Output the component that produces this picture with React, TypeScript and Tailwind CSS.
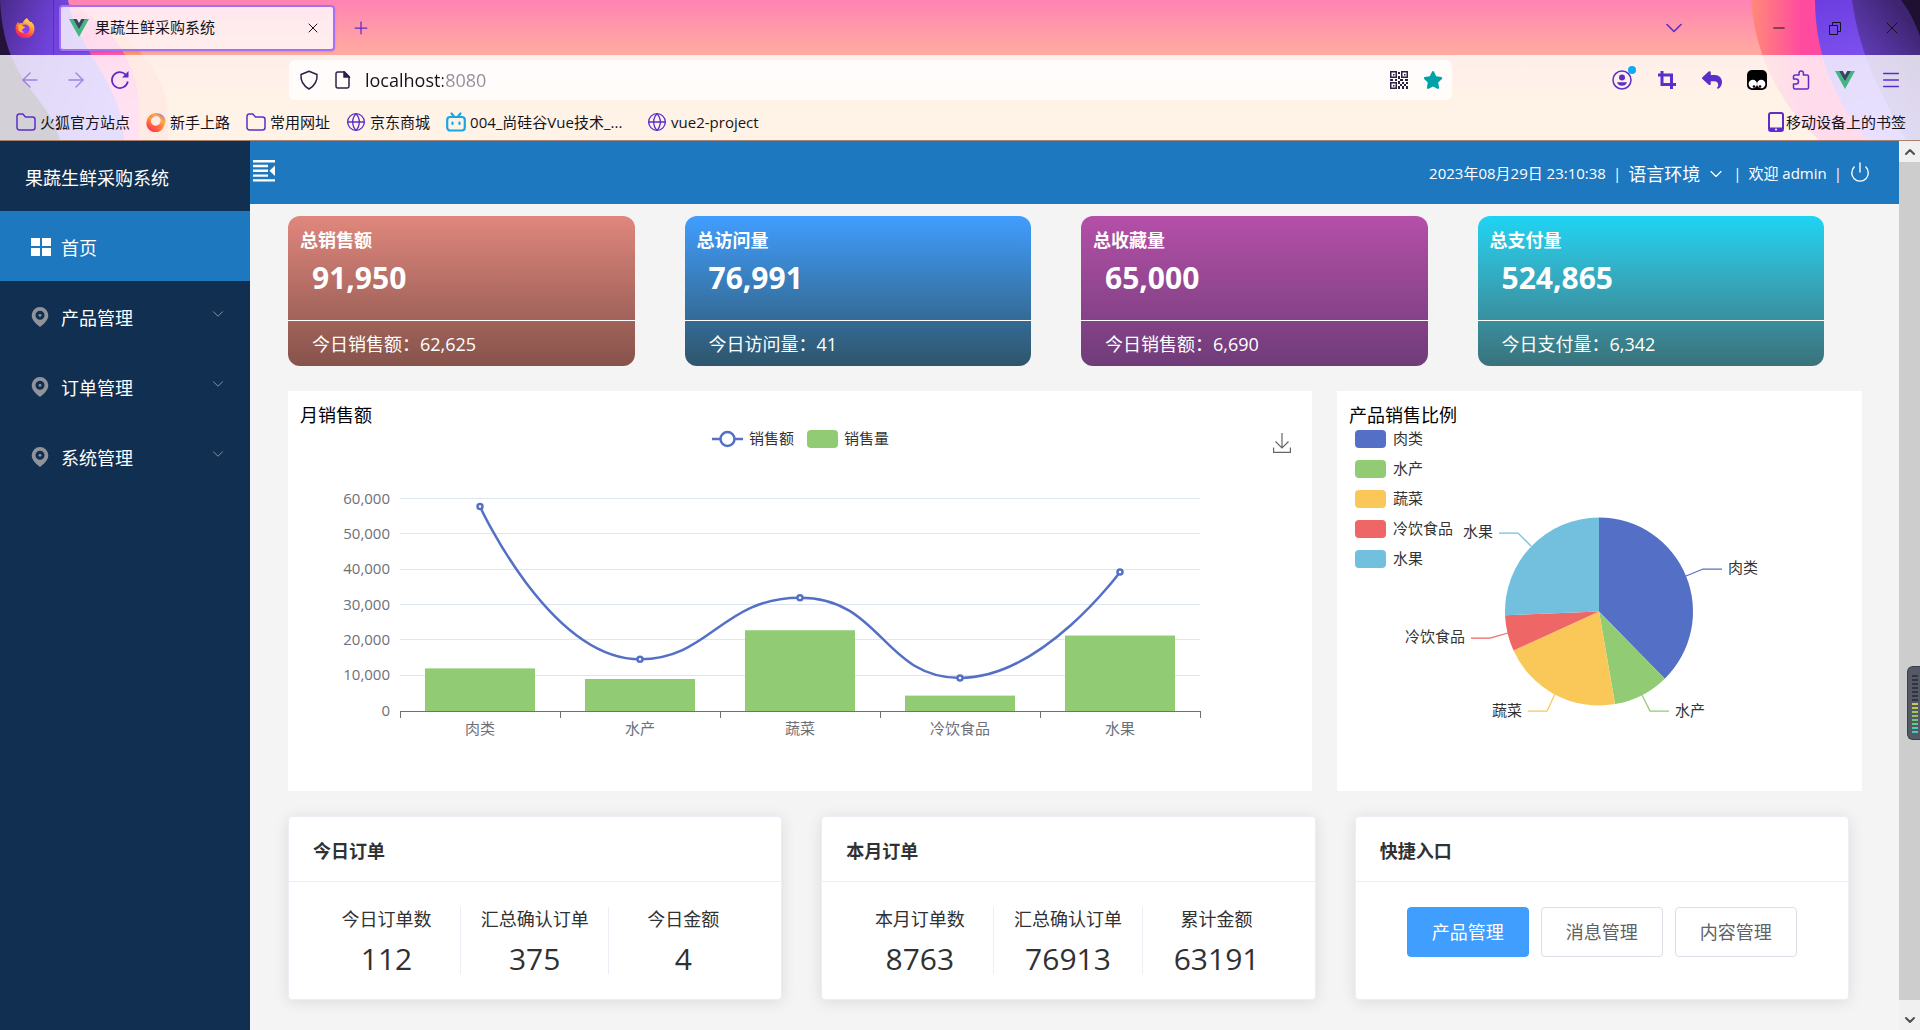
import { useState, type ReactNode } from 'react';
import { ArrowLeft, ArrowRight, ChevronDown, ChevronUp, Globe, Menu, Minus, Plus, Power, X } from 'lucide-react';
import { FaCrop, FaReply, FaStar } from 'react-icons/fa6';

const VueLogo = () => (
  <svg viewBox="0 0 20 18" className="h-[18px] w-5 shrink-0">
    <path d="M0 0h4l6 10.6L16 0h4L10 18z" fill="#41b883" />
    <path d="M4 0h3.8L10 4l2.2-4H16l-6 10.6z" fill="#35495e" />
  </svg>
);

const FirefoxLogo = () => (
  <svg viewBox="0 0 20 20" className="h-5 w-5 shrink-0">
    <defs>
      <linearGradient id="fox" x1="0.8" y1="0" x2="0.3" y2="1">
        <stop offset="0" stopColor="#fff36a" />
        <stop offset="0.4" stopColor="#ff9a2e" />
        <stop offset="0.75" stopColor="#ff3b4e" />
        <stop offset="1" stopColor="#e31587" />
      </linearGradient>
    </defs>
    <path
      d="M12 0c.6 1.8 2.3 3 3.6 4.3.5-.2.6-.6.6-.6 2 1.6 3.3 4.3 3.3 7.3A9.5 9.5 0 0 1 .5 11C.5 7.5 1.8 5.5 3.2 3.8c0 .8.2 1.4.5 1.8 1-.6 2.6-.7 3.7-.1C8.300 3 10 1 12 0z"
      fill="url(#fox)"
    />
    <circle cx="10" cy="11" r="4.6" fill="#8a3df0" />
    <path d="M3.5 7c2-.8 3.7-.2 4.800 1.200 1.200.2 1.900.6 1.600 1.300-.5 1-2.300 1-2.800 2.200-.3 1 .8 2.300 2.800 2.100-2 1.700-5.900.8-6.700-2.200z" fill="#ffb43a" />
  </svg>
);

const StarterIcon = () => (
  <svg viewBox="0 0 20 20" className="h-5 w-5 shrink-0">
    <defs>
      <linearGradient id="starter" x1="1" y1="0" x2="0.2" y2="1">
        <stop offset="0" stopColor="#9059ff" />
        <stop offset="0.35" stopColor="#ffb13b" />
        <stop offset="0.7" stopColor="#ff5b3f" />
        <stop offset="1" stopColor="#ff2a6d" />
      </linearGradient>
    </defs>
    <path d="M10 1a9 9 0 1 0 8.600 11.600A7.600 7.600 0 0 0 13 1.600 9 9 0 0 0 10 1zm1.200 3a5 5 0 1 1-6.400 6.200C4.300 7 7 4 11.200 4z" fill="url(#starter)" fillRule="evenodd" />
    <path d="M3 5a9 9 0 1 0 15 9c-4 3.500-12 2-13-4-.3-2 .2-3.500 1-4.600z" fill="url(#starter)" />
  </svg>
);

const FolderIcon = () => (
  <svg viewBox="0 0 20 18" className="h-[18px] w-5 shrink-0" fill="none" stroke="#5b2ec9" strokeWidth="1.5">
    <path d="M1 3.200A2.200 2.200 0 0 1 3.200 1h3.600L9.500 4h7A2.500 2.500 0 0 1 19 6.500v8a2.500 2.500 0 0 1-2.500 2.500h-13A2.500 2.500 0 0 1 1 14.500z" />
  </svg>
);

const BiliIcon = () => (
  <svg viewBox="0 0 20 20" className="h-5 w-5 shrink-0" fill="none" stroke="#19a7e0" strokeWidth="2.2" strokeLinecap="round">
    <rect x="1.2" y="5" width="17.6" height="13.5" rx="3" />
    <path d="M5.500 1.500 8 4.500M14.500 1.500 12 4.500M6.500 10.500v1.500M13.500 10.500v1.500" />
  </svg>
);

const PuzzleIcon = () => (
  <svg viewBox="0 0 18 20" className="h-5 w-[18px]" fill="none" stroke="#5b2ec9" strokeWidth="1.5">
    <path d="M1.500 9V6.500A1.500 1.500 0 0 1 3 5h4V3.200a2.200 2.200 0 0 1 4.400 0V5H15a1.500 1.500 0 0 1 1.500 1.500V17.500A1.500 1.500 0 0 1 15 19H3a1.500 1.500 0 0 1-1.500-1.500V14H4a2.300 2.300 0 0 0 0-5z" strokeLinejoin="round" />
  </svg>
);

const QrIcon = () => (
  <svg viewBox="0 0 18 18" className="h-[18px] w-[18px]" fill="#2b2147">
    <path d="M0 0h7v7H0zM11 0h7v7h-7zM0 11h7v7H0zM1.500 1.500v4h4v-4zM12.500 1.500v4h4v-4zM1.500 12.500v4h4v-4z" fillRule="evenodd" />
    <path d="M3 3h1.500v1.500H3zM14 3h1.500v1.500H14zM3 14h1.500v1.500H3zM8 1h2v2H8zM8 5h2v3H8zM0 8h3v2H0zM5 8h2v2H5zM10 8h3v2h-3zM15 8h3v2h-3zM8 10h2v3H8zM12 11h2v2h-2zM16 11h2v2h-2zM10 13h2v2h-2zM14 13h2v2h-2zM8 15h2v3H8zM12 15h2v3h-2zM16 15h2v3h-2z" />
  </svg>
);

const PinIcon = () => (
  <svg viewBox="0 0 18 20" className="mt-0.5 h-5 w-[18px] shrink-0">
    <path d="M9 0a8.300 8.300 0 0 1 8.300 8.300C17.300 13 13 17 9 20 5 17 .7 13 .7 8.300A8.300 8.300 0 0 1 9 0zm0 3.800a4.500 4.500 0 1 0 0 9 4.500 4.500 0 0 0 0-9z" fill="#909399" fillRule="evenodd" />
    <circle cx="9" cy="8.3" r="1.4" fill="#909399" />
  </svg>
);

const bookmarks: { title: string; icon: ReactNode; width?: string }[] = [
  { title: '火狐官方站点', icon: <FolderIcon /> },
  { title: '新手上路', icon: <StarterIcon /> },
  { title: '常用网址', icon: <FolderIcon /> },
  { title: '京东商城', icon: <Globe className="h-5 w-5 text-[#5b2ec9]" strokeWidth={1.6} /> },
  { title: '004_尚硅谷Vue技术_...', icon: <BiliIcon />, width: 'w-[185px]' },
  { title: 'vue2-project', icon: <Globe className="h-5 w-5 text-[#5b2ec9]" strokeWidth={1.6} /> },
];

const ThemeArt = () => (
  <>
    <svg viewBox="0 0 180 140" className="absolute left-0 top-0 h-[140px] w-[180px]">
      <defs>
        <linearGradient id="leftPurple" x1="0" y1="0" x2="1" y2="0.4">
          <stop offset="0" stopColor="#4a2a8a" />
          <stop offset="0.45" stopColor="#7043dc" />
          <stop offset="1" stopColor="#8458f5" />
        </linearGradient>
        <linearGradient id="leftPink" x1="0" y1="0" x2="0.3" y2="1">
          <stop offset="0" stopColor="#ff74b0" />
          <stop offset="0.4" stopColor="#ff4da6" />
          <stop offset="1" stopColor="#ff6bc0" />
        </linearGradient>
      </defs>
      <path d="M60 0C110 20 168 60 168 118V140H40V0z" fill="#ff9a72" />
      <path d="M60 0C105 15 138 60 139 105V140H40V0z" fill="url(#leftPink)" />
      <path d="M0 0H68C76 50 122 80 124 140H0z" fill="url(#leftPurple)" />
      <path d="M0 0C4 85 46 90 60 140H0z" fill="#241239" />
    </svg>
    <svg viewBox="1700 0 220 140" className="absolute right-0 top-0 h-[140px] w-[220px]">
      <defs>
        <linearGradient id="rightPink" x1="0" y1="0" x2="1" y2="0">
          <stop offset="0" stopColor="#ff8a78" />
          <stop offset="0.3" stopColor="#ff4b9f" />
          <stop offset="1" stopColor="#ff4b9f" />
        </linearGradient>
        <linearGradient id="rightPurple" x1="0" y1="0" x2="0.2" y2="1">
          <stop offset="0" stopColor="#6c3de0" />
          <stop offset="1" stopColor="#8f66ff" />
        </linearGradient>
        <linearGradient id="rightDeep" x1="0" y1="1" x2="0.6" y2="0">
          <stop offset="0" stopColor="#8458ff" />
          <stop offset="1" stopColor="#3f2472" />
        </linearGradient>
      </defs>
      <path d="M1751 0C1755 60 1785 110 1819 140H1920V0z" fill="url(#rightPink)" />
      <path d="M1815 0C1815 60 1840 110 1868 140H1920V0z" fill="url(#rightPurple)" />
      <path d="M1852 0C1860 60 1885 100 1906 140H1920V0z" fill="url(#rightDeep)" />
      <path d="M1901 0Q1912 14 1920 36V0z" fill="#1f0f33" />
    </svg>
  </>
);

const BrowserChrome = () => (
  <header className="relative border-b border-[#a8826f] bg-linear-to-b from-[#ff83b3] from-0% via-[#ffac9f] via-40% to-[#ffbf85] to-70% text-[15px] text-[#15141a]">
    <ThemeArt />
    <div className="relative flex h-[55px] items-center pr-[18px]">
      <div className="flex h-full w-[54px] items-center border-r border-black/20 pl-[15px]">
        <FirefoxLogo />
      </div>
      <div className="ml-[5px] flex h-[46px] w-[276px] items-center gap-1.5 rounded border-2 border-[#a670f5] bg-white/80 px-2 shadow">
        <VueLogo />
        <span className="grow truncate">果蔬生鲜采购系统</span>
        <button aria-label="关闭标签页" className="mr-1">
          <X className="h-4 w-4" strokeWidth={1.5} />
        </button>
      </div>
      <button aria-label="新建标签页" className="ml-4">
        <Plus className="h-5 w-5 text-[#5b2ec9]" strokeWidth={1.5} />
      </button>
      <button aria-label="列出所有标签页" className="ml-auto">
        <ChevronDown className="h-7 w-7 text-[#5b2ec9]" strokeWidth={1.4} />
      </button>
      <div className="ml-[82px] flex items-center gap-[38px]">
        <button aria-label="最小化">
          <Minus className="h-[18px] w-[18px]" strokeWidth={1.5} />
        </button>
        <button aria-label="还原">
          <svg viewBox="0 0 18 18" className="h-[18px] w-[18px]" fill="none" stroke="#15141a">
            <path d="M3.500 6.500h8v9h-8zM6.500 6V3.500h8v9H12" />
          </svg>
        </button>
        <button aria-label="关闭">
          <X className="h-5 w-5" strokeWidth={1.2} />
        </button>
      </div>
    </div>

    <div className="relative bg-white/80">
      <div className="flex items-center pt-[5px]">
        <div className="flex w-[289px] items-center gap-[22px] pl-[18px] text-[#5b2ec9]">
          <button aria-label="后退" className="opacity-50">
            <ArrowLeft className="h-6 w-6" strokeWidth={1.4} />
          </button>
          <button aria-label="前进" className="opacity-50">
            <ArrowRight className="h-6 w-6" strokeWidth={1.4} />
          </button>
          <button aria-label="刷新">
            <svg viewBox="0 0 20 20" className="h-5 w-5" fill="none" stroke="currentColor" strokeWidth="1.7">
              <path d="M17.800 11.500A8 8 0 1 1 15.500 4.300" />
              <path d="M18.500 1v6.500H12z" fill="currentColor" stroke="none" />
            </svg>
          </button>
        </div>
        <div className="flex h-10 grow items-center rounded-md bg-white/80 pl-2.5 pr-[9px]">
          <svg viewBox="0 0 20 20" className="h-5 w-5" fill="none" stroke="#2b2147" strokeWidth="1.5" strokeLinejoin="round">
            <path d="M10 1.200 18 4.500c.5 6-2 11-8 14.500C4 15.500 1.500 10.500 2 4.500z" />
          </svg>
          <svg viewBox="0 0 16 18" className="ml-4 h-[18px] w-4" fill="none" stroke="#2b2147" strokeWidth="1.5">
            <path d="M2.700 1h6.800L14 5.500v9.800A1.700 1.700 0 0 1 12.300 17H2.700A1.700 1.700 0 0 1 1 15.300V2.700A1.700 1.700 0 0 1 2.700 1z" />
            <path d="M9 1v5h5z" fill="#2b2147" />
          </svg>
          <input
            aria-label="地址栏"
            defaultValue="localhost:8080"
            className="ml-3.5 min-w-0 grow bg-[linear-gradient(90deg,#15141a_78px,#8f8d9a_78px)] bg-clip-text text-lg text-transparent outline-none"
          />
          <button aria-label="二维码">
            <QrIcon />
          </button>
          <button aria-label="编辑此书签" className="ml-[15px]">
            <FaStar className="h-5 w-5 text-[#00a2a8]" />
          </button>
        </div>
        <div className="ml-40 flex items-center gap-[25px] pr-[18px] text-[#5b2ec9]">
          <button aria-label="账户" className="relative">
            <svg viewBox="0 0 20 20" className="h-5 w-5" fill="none" stroke="currentColor" strokeWidth="1.5">
              <circle cx="10" cy="10" r="9" />
              <circle cx="10" cy="7.5" r="3" fill="currentColor" stroke="none" />
              <path d="M5 12.200h10c-.8 2.500-2.600 3.500-5 3.500s-4.200-1-5-3.500z" fill="currentColor" stroke="none" />
            </svg>
            <span className="absolute -right-1 -top-1 h-2 w-2 rounded-full bg-[#0fa9f5]" />
          </button>
          <button aria-label="截图">
            <svg viewBox="0 0 20 20" className="h-5 w-5" fill="none" stroke="currentColor" strokeWidth="3">
              <path d="M5 1v13.500h14M1 5h13.500v14" />
            </svg>
          </button>
          <button aria-label="撤销">
            <FaReply className="h-5 w-5" />
          </button>
          <button aria-label="脚本管理">
            <svg viewBox="0 0 20 20" className="h-5 w-5">
              <rect width="20" height="20" rx="5" fill="#000" />
              <circle cx="5.8" cy="14" r="4.2" fill="#fff" />
              <circle cx="14.2" cy="14" r="4.2" fill="#fff" />
              <circle cx="7" cy="16.5" r="1.3" fill="#000" />
              <circle cx="13" cy="16.5" r="1.3" fill="#000" />
            </svg>
          </button>
          <button aria-label="扩展">
            <PuzzleIcon />
          </button>
          <button aria-label="Vue Devtools">
            <VueLogo />
          </button>
          <button aria-label="应用程序菜单">
            <Menu className="h-[22px] w-[22px]" strokeWidth={1.6} />
          </button>
        </div>
      </div>
      <div className="flex h-10 items-center gap-4 pl-4 pr-3.5 pt-1">
        {bookmarks.map((bookmark) => (
          <a key={bookmark.title} href="#" className={`flex items-center gap-1 whitespace-nowrap ${bookmark.width ?? ''}`}>
            {bookmark.icon}
            {bookmark.title}
          </a>
        ))}
        <a href="#" className="ml-auto flex items-center gap-0.5 whitespace-nowrap">
          <svg viewBox="0 0 16 20" className="h-5 w-4">
            <rect x="1" y="1" width="14" height="18" rx="2" fill="none" stroke="#5b2ec9" strokeWidth="2" />
            <path d="M1 15.500h14V19H1z" fill="#5b2ec9" />
            <circle cx="8" cy="17.5" r="1" fill="#fff" />
          </svg>
          移动设备上的书签
        </a>
      </div>
    </div>
  </header>
);

const menus = ['产品管理', '订单管理', '系统管理'];

const Sidebar = () => (
  <aside className="w-[250px] shrink-0 bg-[#112f50] text-lg text-white">
    <h1 className="flex h-[70px] items-center pl-[25px] pt-1">果蔬生鲜采购系统</h1>
    <nav>
      <a href="#" className="flex h-[70px] items-center gap-2.5 bg-[#1e78bf] pl-[31px]">
        <svg viewBox="0 0 20 20" className="mt-0.5 h-5 w-5" fill="#fff">
          <path d="M0 1h9v8H0zM11 1h9v8h-9zM0 11h9v8H0zM11 11h9v8h-9z" />
        </svg>
        <span className="pt-1">首页</span>
      </a>
      {menus.map((menu) => (
        <button key={menu} className="flex h-[70px] w-full items-center gap-3 pl-[31px] pr-[23px]">
          <PinIcon />
          <span className="pt-1">{menu}</span>
          <ChevronDown className="mb-1 ml-auto h-[18px] w-[18px] text-[#909399]" strokeWidth={1.3} />
        </button>
      ))}
    </nav>
  </aside>
);

const TopBar = () => (
  <div className="flex h-[63px] items-center bg-[#1e78bf] pl-[3px] pr-7 text-[15px] text-white">
    <button aria-label="折叠菜单">
      <svg viewBox="0 0 22 22" className="mb-1 h-[22px] w-[22px]" fill="#fff">
        <path d="M0 0h22v2.500H0zM0 4.800h15v2.400H0zM0 9.600h15V12H0zM0 14.400h15v2.400H0zM0 19.200h22v2.300H0zM22 5.500v10.500L16.500 10.800z" />
      </svg>
    </button>
    <div className="ml-auto flex items-center gap-[7px] pt-0.5">
      <time>2023年08月29日 23:10:38</time>
      <span>|</span>
      <button className="flex items-center gap-1.5 text-lg">
        语言环境
        <ChevronDown className="h-5 w-5" strokeWidth={1.4} />
      </button>
      <span>|</span>
      <span>欢迎 admin</span>
      <span>|</span>
      <button aria-label="退出登录">
        <Power className="mb-1 h-[22px] w-[22px]" strokeWidth={1.5} />
      </button>
    </div>
  </div>
);

const summaries = [
  { title: '总销售额', total: '91,950', label: '今日销售额', today: '62,625', color: 'from-[#e0877d] to-[#86534b]' },
  { title: '总访问量', total: '76,991', label: '今日访问量', today: '41', color: 'from-[#409eff] to-[#2e556b]' },
  { title: '总收藏量', total: '65,000', label: '今日销售额', today: '6,690', color: 'from-[#b54fa8] to-[#6f3c79]' },
  { title: '总支付量', total: '524,865', label: '今日支付量', today: '6,342', color: 'from-[#1cd4f4] to-[#39727a]' },
];

const sales = [
  { name: '肉类', amount: 58000, count: 12200, color: '#5470c6' },
  { name: '水产', amount: 14800, count: 9200, color: '#91cc75' },
  { name: '蔬菜', amount: 32200, count: 23000, color: '#fac858' },
  { name: '冷饮食品', amount: 9500, count: 4500, color: '#ee6666' },
  { name: '水果', amount: 39500, count: 21500, color: '#73c0de' },
];

const ticks = [0, 10000, 20000, 30000, 40000, 50000, 60000];

const SalesChart = () => {
  const yOf = (value: number) => 320.5 - (value / 60000) * 212;
  const xOf = (index: number) => 192 + index * 160;

  const points = sales.map((item, i) => ({ x: xOf(i), y: yOf(item.amount) }));
  const lengths = points.slice(1).map((p, i) => Math.hypot(p.x - points[i].x, p.y - points[i].y));

  // every inner point is a local extreme, so its handles stay horizontal
  const handle = (i: number, segment: number) => {
    if (i === 0 || i === points.length - 1) return 0;
    return (160 * lengths[segment]) / (lengths[i - 1] + lengths[i]);
  };
  const line = points
    .slice(1)
    .map((p, i) => `C${points[i].x + handle(i, i)} ${points[i].y} ${p.x - handle(i + 1, i)} ${p.y} ${p.x} ${p.y}`)
    .join('');

  return (
    <svg viewBox="0 36 1024 364" className="block w-full text-[15px]">
      <path d="M424 48h31" stroke="#5470c6" strokeWidth="2.5" />
      <circle cx="439.5" cy="48" r="7" fill="#fff" stroke="#5470c6" strokeWidth="2.5" />
      <text x="461" y="53" fill="#333">销售额</text>
      <rect x="519" y="39" width="31" height="18" rx="4" fill="#91cc75" />
      <text x="556" y="53" fill="#333">销售量</text>

      {ticks.map((tick) => (
        <g key={tick}>
          {tick > 0 && <path d={`M112 ${Math.floor(yOf(tick)) - 0.5}H912`} stroke="#e0e6f1" />}
          <text x="102" y={yOf(tick) + 4} textAnchor="end" fill="#6e7079">{tick.toLocaleString('en-US')}</text>
        </g>
      ))}

      {sales.map((item, i) => (
        <g key={item.name}>
          <rect x={xOf(i) - 55} y={yOf(item.count)} width="110" height={320.5 - yOf(item.count)} fill="#91cc75" />
          <text x={xOf(i)} y="343" textAnchor="middle" fill="#6e7079">{item.name}</text>
        </g>
      ))}
      <path d="M112 320.500H913M112.500 321v6M272.500 321v6M432.500 321v6M592.500 321v6M752.500 321v6M912.500 321v6" stroke="#6e7079" fill="none" />

      <path d={`M${points[0].x} ${points[0].y}${line}`} stroke="#5470c6" strokeWidth="2.5" fill="none" />
      {points.map((p) => (
        <circle key={p.x} cx={p.x} cy={p.y} r="2.5" fill="#fff" stroke="#5470c6" strokeWidth="2.5" />
      ))}
    </svg>
  );
};

const pieLabels = [
  { line: 'M349 185L366 178H385', x: 391, y: 182, anchor: 'start' },
  { line: 'M305 304L313 320H332', x: 338, y: 325, anchor: 'start' },
  { line: 'M218 303L210 320H191', x: 185, y: 325, anchor: 'end' },
  { line: 'M171 242L153 247H134', x: 128, y: 251, anchor: 'end' },
  { line: 'M194 155L181 142H162', x: 156, y: 146, anchor: 'end' },
] as const;

const PieChart = () => {
  const total = sales.reduce((sum, item) => sum + item.amount, 0);
  const pointAt = (value: number) => {
    const angle = (value / total) * Math.PI * 2;
    return `${262 + 94 * Math.sin(angle)} ${220.5 - 94 * Math.cos(angle)}`;
  };
  const slices = sales.map((item, i) => {
    const start = sales.slice(0, i).reduce((sum, s) => sum + s.amount, 0);
    return `M262 220.5L${pointAt(start)}A94 94 0 0 1 ${pointAt(start + item.amount)}z`;
  });

  return (
    <svg viewBox="0 36 525 364" className="block w-full text-[15px]">
      {sales.map((item, i) => (
        <g key={item.name}>
          <rect x="18" y={39 + i * 30} width="31" height="18" rx="4" fill={item.color} />
          <text x="56" y={53 + i * 30} fill="#333">{item.name}</text>
          <path d={slices[i]} fill={item.color} />
          <path d={pieLabels[i].line} fill="none" stroke={item.color} strokeWidth="1.25" />
          <text x={pieLabels[i].x} y={pieLabels[i].y} textAnchor={pieLabels[i].anchor} fill="#333">{item.name}</text>
        </g>
      ))}
    </svg>
  );
};

const orders = [
  {
    title: '今日订单',
    items: [
      { label: '今日订单数', value: '112' },
      { label: '汇总确认订单', value: '375' },
      { label: '今日金额', value: '4' },
    ],
  },
  {
    title: '本月订单',
    items: [
      { label: '本月订单数', value: '8763' },
      { label: '汇总确认订单', value: '76913' },
      { label: '累计金额', value: '63191' },
    ],
  },
];

const Card = ({ title, children }: { title: string; children: ReactNode }) => (
  <section className="rounded border border-[#ebeef5] bg-white text-[#303133] shadow-[0_2px_15px_rgba(0,0,0,0.1)]">
    <h2 className="flex h-[65px] items-center border-b border-[#ebeef5] px-6 pt-1 text-lg font-bold">{title}</h2>
    <div className="px-6 py-[25px]">{children}</div>
  </section>
);

const Dashboard = () => {
  const [active, setActive] = useState('产品管理');

  return (
    <main className="pb-[30px] pl-[38px] pt-3">
      <div className="grid grid-cols-4 gap-[50px] pr-[75px]">
        {summaries.map((item) => (
          <section key={item.title} className={`rounded-xl bg-linear-to-b text-white ${item.color}`}>
            <div className="h-[104px] px-3 pt-2.5">
              <h2 className="text-lg font-bold">{item.title}</h2>
              <p className="pl-3 pt-1.5 text-3xl font-bold">{item.total}</p>
            </div>
            <p className="flex h-[46px] items-center border-t border-white pl-6 text-lg">
              {item.label}：{item.today}
            </p>
          </section>
        ))}
      </div>

      <div className="mt-[25px] grid grid-cols-[1024fr_525fr] gap-[25px] pr-[37px]">
        <section className="relative bg-white">
          <h2 className="h-9 pl-3 pt-2.5 text-lg text-black">月销售额</h2>
          <SalesChart />
          <button aria-label="保存为图片" className="absolute right-[21px] top-[42px]">
            <svg viewBox="0 0 18 20" className="h-5 w-[18px]" fill="none" stroke="#666" strokeWidth="1.2">
              <path d="M9 0v15M2.500 8.500 9 15l6.500-6.500M.6 14.500v4.800h16.800v-4.800" />
            </svg>
          </button>
        </section>
        <section className="bg-white">
          <h2 className="h-9 pl-3 pt-2.5 text-lg text-black">产品销售比例</h2>
          <PieChart />
        </section>
      </div>

      <div className="mt-[25px] grid grid-cols-3 gap-[39px] pr-[50px]">
        {orders.map((order) => (
          <Card key={order.title} title={order.title}>
            <dl className="grid grid-cols-3 divide-x divide-[#ebeef5] text-center">
              {order.items.map((item) => (
                <div key={item.label} className="h-[67px]">
                  <dt className="whitespace-nowrap text-lg leading-6">{item.label}</dt>
                  <dd className="pt-2.5 text-3xl">{item.value}</dd>
                </div>
              ))}
            </dl>
          </Card>
        ))}
        <Card title="快捷入口">
          <div className="flex justify-center gap-3">
            {['产品管理', '消息管理', '内容管理'].map((name) => (
              <button
                key={name}
                onClick={() => setActive(name)}
                className={`h-[50px] w-[122px] rounded border text-lg ${
                  active === name ? 'border-[#409eff] bg-[#409eff] text-white' : 'border-[#dcdfe6] bg-white text-[#606266]'
                }`}
              >
                {name}
              </button>
            ))}
          </div>
        </Card>
      </div>
    </main>
  );
};

const levels = [
  'bg-[#33343c]', 'bg-[#33343c]', 'bg-[#33343c]', 'bg-[#33343c]', 'bg-[#33343c]', 'bg-[#33343c]', 'bg-[#33343c]',
  'bg-[#c9c94a]', 'bg-[#b5c955]', 'bg-[#9bc95c]', 'bg-[#83c96c]', 'bg-[#6cc97c]', 'bg-[#5ccb92]', 'bg-[#4fcbaa]', 'bg-[#45cbb8]',
];

const ScrollBar = () => (
  <div className="relative flex w-[21px] shrink-0 flex-col bg-[#f0f0f0] text-[#505050]">
    <div className="flex h-[21px] items-center justify-center">
      <ChevronUp className="h-4 w-4" strokeWidth={3} />
    </div>
    <div className="grow bg-[#cdcdcd]" />
    <div className="flex h-[30px] items-end justify-center pb-0.5">
      <ChevronDown className="h-4 w-4" strokeWidth={3} />
    </div>
    <div className="absolute right-0 top-[525px] flex h-[74px] w-[13px] flex-col items-end gap-0.5 rounded-l-md border border-r-0 border-[#3c3f4a] bg-[#555966] pr-0.5 pt-2">
      {levels.map((level, i) => (
        <span key={i} className={`h-0.5 w-1.5 shrink-0 ${level}`} />
      ))}
    </div>
  </div>
);

export default function App() {
  return (
    <div className="flex min-h-screen flex-col bg-[#f4f4f4] font-['Open_Sans','Noto_Sans_CJK_SC',sans-serif]">
      <BrowserChrome />
      <div className="flex grow">
        <Sidebar />
        <div className="min-w-0 grow">
          <TopBar />
          <Dashboard />
        </div>
        <ScrollBar />
      </div>
    </div>
  );
}
